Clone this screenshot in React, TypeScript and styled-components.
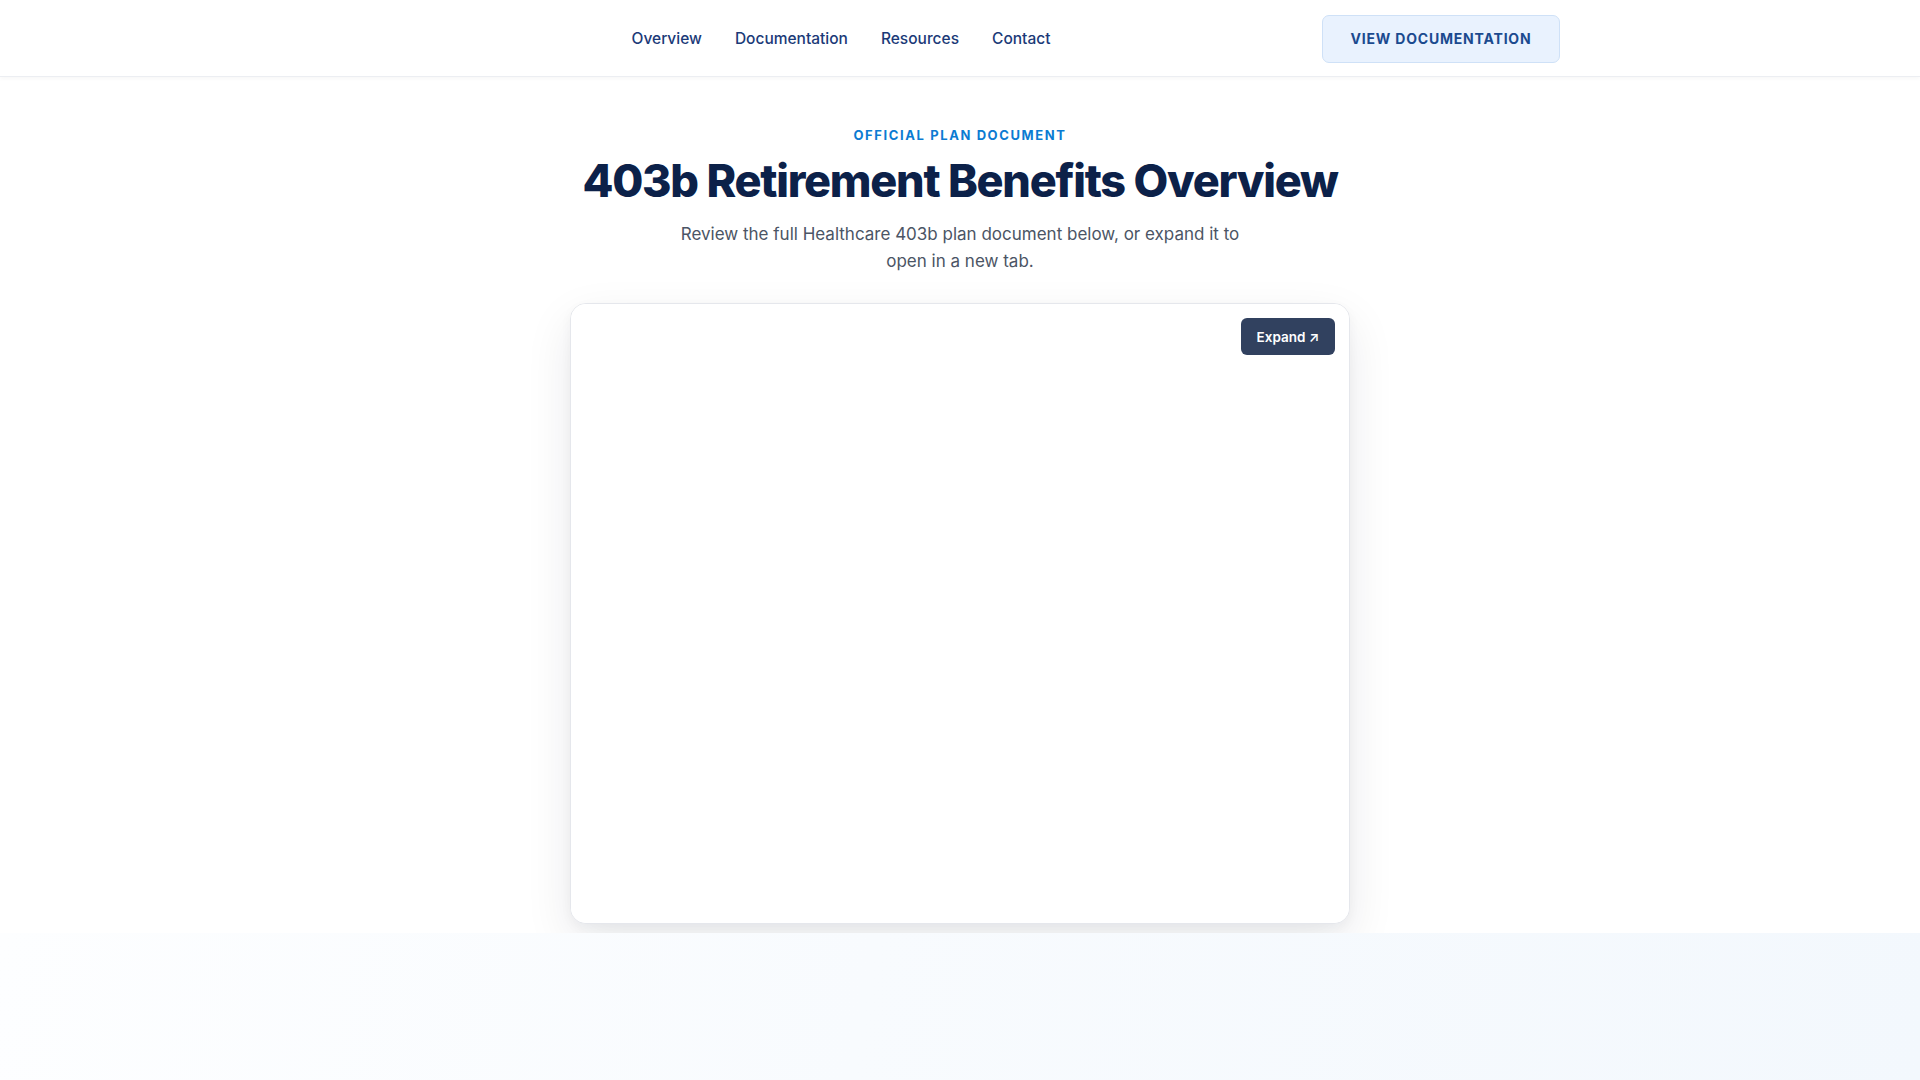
import React from "react";
import styled, { createGlobalStyle } from "styled-components";

const GlobalStyle = createGlobalStyle`
  * { box-sizing: border-box; }
  html, body {
    margin: 0;
    padding: 0;
    background: #ffffff;
    font-family: Inter, "Noto Sans", "Liberation Sans", sans-serif;
    -webkit-font-smoothing: antialiased;
  }
`;

const Page = styled.div`
  display: flex;
  flex-direction: column;
  min-height: 1080px;
`;

const HeaderSc = styled.header`
  height: 77px;
  background: #ffffff;
  border-bottom: 1px solid #eceef2;
  box-shadow: 0 2px 4px rgba(15, 23, 42, 0.03);
  position: relative;
  z-index: 2;
`;

const HeaderInnerSc = styled.div`
  width: 1200px;
  height: 100%;
  margin: 0 auto;
  display: flex;
  align-items: center;
  justify-content: space-between;
`;

const LogoSc = styled.div`
  width: 0;
  height: 40px;
`;

const NavSc = styled.nav`
  display: flex;
  align-items: center;
  gap: 33px;
`;

const NavLinkSc = styled.a`
  font-size: 15.5px;
  font-weight: 500;
  color: #1b3a78;
  text-decoration: none;
  cursor: pointer;
`;

const CtaButtonSc = styled.button`
  width: 238px;
  height: 48px;
  margin-top: 1px;
  background: #e9f2fe;
  border: 1px solid #cfe1f7;
  border-radius: 7px;
  font-family: inherit;
  font-size: 14px;
  font-weight: 700;
  letter-spacing: 0.8px;
  color: #1b4a8f;
  cursor: pointer;
`;

const HeroSc = styled.section`
  background: #ffffff;
  padding: 48px 0 9px;
  display: flex;
  flex-direction: column;
  align-items: center;
  overflow: hidden;
`;

const EyebrowSc = styled.div`
  font-size: 13px;
  line-height: 20px;
  font-weight: 700;
  letter-spacing: 1.6px;
  color: #0b7bd2;
  text-transform: uppercase;
`;

const TitleSc = styled.h1`
  margin: 9px 0 0;
  font-size: 45px;
  line-height: 54px;
  font-weight: 800;
  letter-spacing: -1.25px;
  color: #0c2149;
`;

const LeadSc = styled.p`
  margin: 13px 0 0;
  max-width: 570px;
  text-align: center;
  font-size: 17px;
  line-height: 27px;
  color: #4b5565;
`;

const CardSc = styled.div`
  position: relative;
  margin-top: 28px;
  width: 780px;
  height: 621px;
  background: #ffffff;
  border: 1px solid #e5e7ec;
  border-radius: 16px;
  box-shadow: 0 18px 48px rgba(15, 23, 42, 0.09), 0 4px 12px rgba(15, 23, 42, 0.04);
  overflow: hidden;
`;

const ViewerSc = styled.div`
  width: 100%;
  height: 100%;
  background: #ffffff;
`;

const ExpandButtonSc = styled.button`
  position: absolute;
  top: 14px;
  right: 14px;
  width: 94px;
  height: 37px;
  background: #31415f;
  border: none;
  border-radius: 6px;
  color: #ffffff;
  font-family: inherit;
  font-size: 13.5px;
  font-weight: 600;
  cursor: pointer;
`;

const FooterBandSc = styled.section`
  flex: 1;
  position: relative;
  background: linear-gradient(100deg, #fdfeff 0%, #f8fbfe 45%, #f3f8fd 100%);
`;

const navItems = ["Overview", "Documentation", "Resources", "Contact"];

export default function App() {
  return (
    <>
      <GlobalStyle />
      <Page>
        <HeaderSc>
          <HeaderInnerSc>
            <LogoSc />
            <NavSc>
              {navItems.map((item) => (
                <NavLinkSc key={item}>{item}</NavLinkSc>
              ))}
            </NavSc>
            <CtaButtonSc>VIEW DOCUMENTATION</CtaButtonSc>
          </HeaderInnerSc>
        </HeaderSc>
        <HeroSc>
          <EyebrowSc>Official Plan Document</EyebrowSc>
          <TitleSc>403b Retirement Benefits Overview</TitleSc>
          <LeadSc>
            Review the full Healthcare 403b plan document below, or expand it to open in a new tab.
          </LeadSc>
          <CardSc>
            <ViewerSc />
            <ExpandButtonSc>Expand ↗</ExpandButtonSc>
          </CardSc>
        </HeroSc>
        <FooterBandSc />
      </Page>
    </>
  );
}
